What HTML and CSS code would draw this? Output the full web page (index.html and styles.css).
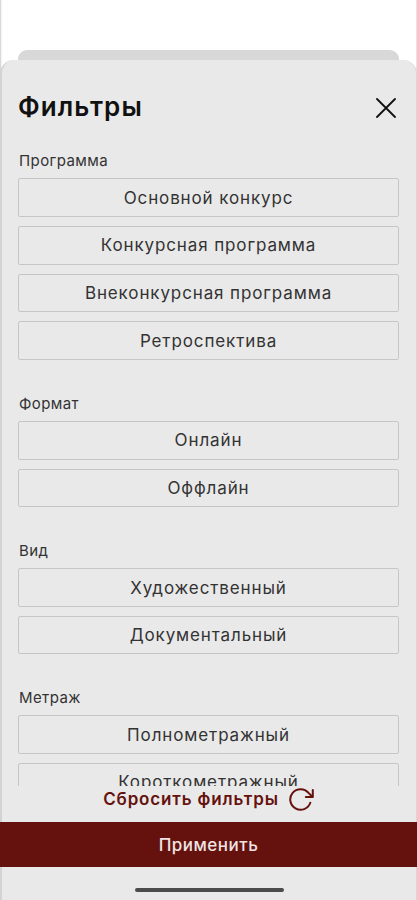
FILE: index.html
```html
<!DOCTYPE html>
<html lang="ru">
<head>
    <meta charset="UTF-8">
    <meta name="viewport" content="width=device-width, initial-scale=1.0">
    <title>Фильтры</title>
    <link rel="stylesheet" href="styles.css">
</head>
<body>
    <div class="screen">
        <div class="back-card"></div>
        <div class="sheet">
            <header>
                <h1>Фильтры</h1>
                <button class="close" aria-label="Закрыть">
                    <svg width="20" height="20" viewBox="0 0 20 20" fill="none" stroke="#111" stroke-width="1.8" stroke-linecap="round">
                        <path d="M1 1L19 19M19 1L1 19"/>
                    </svg>
                </button>
            </header>

            <main class="filters">
                <section>
                    <h2>Программа</h2>
                    <button class="option">Основной конкурс</button>
                    <button class="option">Конкурсная программа</button>
                    <button class="option">Внеконкурсная программа</button>
                    <button class="option">Ретроспектива</button>
                </section>
                <section>
                    <h2>Формат</h2>
                    <button class="option">Онлайн</button>
                    <button class="option">Оффлайн</button>
                </section>
                <section>
                    <h2>Вид</h2>
                    <button class="option">Художественный</button>
                    <button class="option">Документальный</button>
                </section>
                <section>
                    <h2>Метраж</h2>
                    <button class="option">Полнометражный</button>
                    <button class="option">Короткометражный</button>
                </section>
            </main>
        </div>

        <footer>
            <button class="reset">
                <span>Сбросить фильтры</span>
                <svg width="25" height="25" viewBox="0 0 25 25" fill="none" stroke="#65120f" stroke-width="2" stroke-linecap="round" stroke-linejoin="round">
                    <path d="M21.3 15.8A10.3 10.3 0 1 1 19.5 5.9L23.4 9.8"/>
                    <path d="M23.8 3V10H16.8"/>
                </svg>
            </button>
            <button class="apply">Применить</button>
            <div class="home-bar"></div>
        </footer>
    </div>
</body>
</html>
```

FILE: styles.css
```css
* {
    box-sizing: border-box;
}
body {
    margin: 0;
    font-family: Inter, "Open Sans", sans-serif;
    background-color: #ffffff;
    color: #333333;
}
button {
    font-family: inherit;
    background: none;
    border: none;
    padding: 0;
    cursor: pointer;
}
.screen {
    height: 900px;
    padding-top: 50px;
    display: flex;
    flex-direction: column;
    overflow: hidden;
    background: linear-gradient(to right, #d8d8d8 1px, #f2f2f2 1px, #ffffff 3px, #ffffff 416px, #e4e4e4 416px);
}
.back-card {
    flex: none;
    height: 10px;
    margin: 0 18px;
    border-radius: 9px 9px 0 0;
    background-color: #d8d8d8;
}
.sheet {
    flex: none;
    height: 726px;
    display: flex;
    flex-direction: column;
    padding: 0 17px 0 16px;
    border-left: 2px solid #d3d3d3;
    border-right: 1px solid #d8d8d8;
    border-radius: 14px 14px 0 0;
    background-color: #e9e9e9;
}
header {
    flex: none;
    height: 92px;
    display: flex;
    justify-content: space-between;
    align-items: center;
}
h1 {
    margin: 0;
    font-size: 26px;
    font-weight: 600;
    letter-spacing: 1.1px;
    color: #111111;
}
.close {
    display: flex;
    margin: 3px 3px 0 0;
}
.filters {
    flex: 1;
    min-height: 0;
    display: flex;
    flex-direction: column;
    gap: 34.7px;
    overflow: hidden;
}
section {
    flex: none;
    display: flex;
    flex-direction: column;
    gap: 9.1px;
}
h2 {
    margin: 0 0 -0.8px;
    padding-left: 1px;
    font-size: 15px;
    line-height: 18px;
    font-weight: 400;
    letter-spacing: 0.4px;
}
.option {
    height: 38.6px;
    border: 1px solid #c6c6c6;
    border-radius: 2px;
    font-size: 17px;
    letter-spacing: 0.88px;
    color: #333333;
}
footer {
    flex: 1;
    display: flex;
    flex-direction: column;
    background: linear-gradient(to right, #d3d3d3 2px, #e9e9e9 2px, #e9e9e9 416px, #d8d8d8 416px);
}
.reset {
    height: 36px;
    display: flex;
    justify-content: center;
    align-items: flex-start;
    gap: 10px;
    padding: 1px 0 0;
    font-size: 17px;
    line-height: 25px;
    font-weight: 600;
    letter-spacing: 0.85px;
    color: #65120f;
}
.apply {
    height: 45px;
    background-color: #65120f;
    color: #efe4e3;
    font-size: 17px;
    font-weight: 500;
    letter-spacing: 0.5px;
}
.home-bar {
    width: 149px;
    height: 4px;
    margin: 21px 0 0 135px;
    border-radius: 2px;
    background-color: #4b4b4b;
}
```
